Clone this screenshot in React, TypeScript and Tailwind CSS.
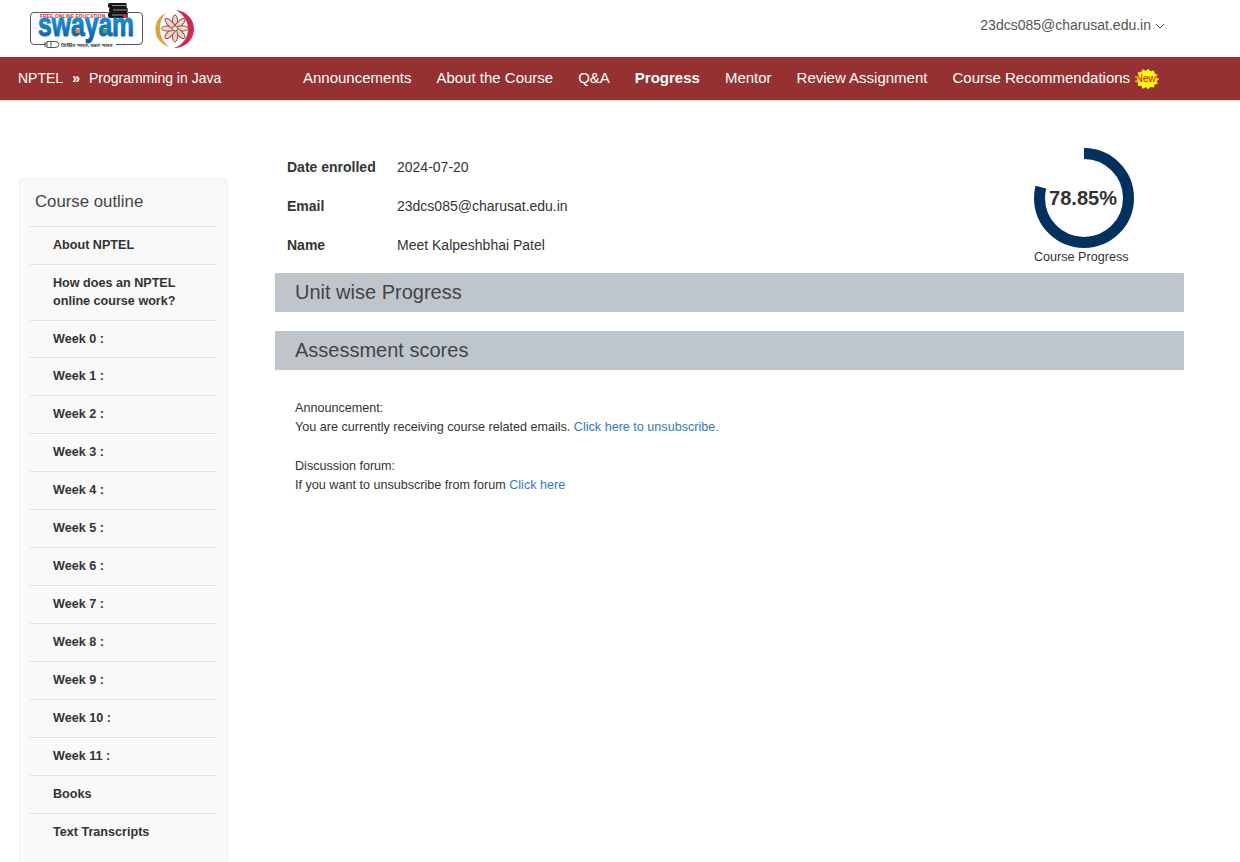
const navLinks = [
  "Announcements",
  "About the Course",
  "Q&A",
  "Progress",
  "Mentor",
  "Review Assignment",
];

const outline = [
  "About NPTEL",
  "How does an NPTEL online course work?",
  "Week 0 :",
  "Week 1 :",
  "Week 2 :",
  "Week 3 :",
  "Week 4 :",
  "Week 5 :",
  "Week 6 :",
  "Week 7 :",
  "Week 8 :",
  "Week 9 :",
  "Week 10 :",
  "Week 11 :",
  "Books",
  "Text Transcripts",
];

const details = [
  ["Date enrolled", "2024-07-20"],
  ["Email", "23dcs085@charusat.edu.in"],
  ["Name", "Meet Kalpeshbhai Patel"],
];

function SwayamLogo() {
  return (
    <svg width="116" height="53" viewBox="0 0 116 53" className="block">
      <defs>
        <linearGradient id="swayamBlue" x1="0" y1="0" x2="0" y2="1">
          <stop offset="0" stopColor="#22a6e6" />
          <stop offset="1" stopColor="#0a5ca6" />
        </linearGradient>
      </defs>
      {/* outline, open at the plug and under the books */}
      <path d="M16 42.500H4a3.500 3.500 0 0 1-3.500-3.500V14A3.500 3.500 0 0 1 4 10.500h74M98 10.500h11a3.500 3.500 0 0 1 3.500 3.500v25a3.500 3.500 0 0 1-3.500 3.500H86" fill="none" stroke="#555" />
      {/* books */}
      <rect x="78" y="1" width="19" height="5" rx="2" fill="#151515" />
      <rect x="79" y="5.500" width="19" height="5" rx="2" fill="#151515" />
      <rect x="78" y="10" width="20" height="6" rx="2" fill="#151515" />
      <path d="M82 3.500h15M83 8h15M82 13h16" stroke="#eee" strokeWidth="0.6" />
      <rect x="93" y="13" width="5" height="3" fill="#d8232a" />
      <text x="10" y="15.500" fontSize="4.800" fontWeight="700" fill="#d8232a" letterSpacing="0.17" fontFamily="Liberation Sans, sans-serif">
        FREE ONLINE EDUCATION
      </text>
      <text transform="translate(8 34) scale(1 1.350)" fontSize="24.700" fontWeight="700" fill="url(#swayamBlue)" stroke="url(#swayamBlue)" strokeWidth="0.8" fontFamily="Liberation Sans, sans-serif">
        swayam
      </text>
      <rect x="46" y="27" width="4" height="4" fill="#f08a1d" />
      <rect x="73" y="27" width="4" height="4" fill="#3fae49" />
      {/* plug */}
      <path d="M17 39.500h8q4 0 4 3t-4 3h-8zM14 41h3M14 44h3M21 39.500v6" fill="#fff" stroke="#555" />
      <text x="31" y="44.500" fontSize="5.200" fontWeight="700" fill="#444" fontFamily="Noto Sans, Liberation Sans, sans-serif">
        शिक्षित भारत, उन्नत भारत
      </text>
    </svg>
  );
}

function InstituteLogo() {
  const petals = [0, 45, 90, 135, 180, 225, 270, 315];
  return (
    <svg width="40" height="40" viewBox="0 0 40 40" className="block">
      <path d="M11 4C2 8-1 17 1 25c1.500 6 6 10.500 13 13C8 33 5 27 5 20 5 13 7 8 11 4z" fill="#d9a441" />
      <path d="M21 1c10 1 18 9 18 19 0 11-9 19-20 19 7-2 14-9 14-19 0-8-5-15-12-19z" fill="#cf2a52" />
      <g stroke="#9c4a3d" strokeWidth="1" fill="#efd5cb">
        {petals.map((deg) => (
          <ellipse key={deg} cx="20" cy="12.500" rx="2.600" ry="6.500" transform={`rotate(${deg} 20 19.500)`} />
        ))}
      </g>
      <circle cx="20" cy="19.500" r="2.500" fill="#fff" stroke="#9c4a3d" />
    </svg>
  );
}

function NewBadge() {
  const spikes = 13;
  const points = Array.from({ length: spikes * 2 }, (_, i) => {
    const a = (Math.PI * i) / spikes;
    const k = i % 2 === 0 ? 1 : 0.8;
    return `${(12 + 12 * k * Math.cos(a)).toFixed(1)},${(10 + 10 * k * Math.sin(a)).toFixed(1)}`;
  }).join(" ");
  return (
    <span className="relative ml-[5px] inline-flex h-[20px] w-[24px] items-center justify-center">
      <svg width="24" height="20" viewBox="0 0 24 20" className="absolute inset-0">
        <polygon points={points} fill="#ffff00" stroke="#fff6a0" strokeWidth="0.5" />
      </svg>
      <span className="relative whitespace-nowrap text-[10px] leading-none text-[#e00000]">New!</span>
    </span>
  );
}

function ProgressRing() {
  const r = 44.5;
  const c = 2 * Math.PI * r;
  return (
    <div className="w-[100px]">
      <div className="relative h-[100px] w-[100px]">
        <svg width="100" height="100" viewBox="0 0 100 100" className="block -rotate-90">
          <circle
            cx="50"
            cy="50"
            r={r}
            fill="none"
            stroke="#03315f"
            strokeWidth="11"
            strokeDasharray={`${c * 0.7885} ${c}`}
          />
        </svg>
        <div className="absolute inset-0 flex items-center justify-center pr-[2px] text-[20px] font-bold text-[#333]">
          78.85%
        </div>
      </div>
      <div className="mt-[1px] whitespace-nowrap text-[12.600px] leading-[16px] text-[#333]">Course Progress</div>
    </div>
  );
}

export default function App() {
  return (
    <div className="h-[862px] overflow-hidden bg-white font-['Liberation_Sans',Arial,sans-serif] text-[14px] text-[#333]">
      {/* Top bar */}
      <header className="flex h-[57px] items-center justify-between pl-[30px] pr-[75px]">
        <div className="flex items-center gap-[9px]">
          <SwayamLogo />
          <InstituteLogo />
        </div>
        <div className="flex -translate-y-[3px] items-center gap-[4px] text-[#555]">
          23dcs085@charusat.edu.in
          <svg width="10" height="6" viewBox="0 0 10 6" fill="none" stroke="#555">
            <path d="M1 1l4 4 4-4" />
          </svg>
        </div>
      </header>

      {/* Nav */}
      <nav className="flex h-[44px] items-center border-b border-[#ddd] bg-[#953131] text-white">
        <div className="flex w-[303px] shrink-0 items-center pl-[18px] text-[14px]">
          NPTEL
          <span className="mx-[9px] font-bold">»</span>
          Programming in Java
        </div>
        <div className="flex items-center gap-[25px] text-[15px]">
          {navLinks.map((link) => (
            <a key={link} className={link === "Progress" ? "font-bold" : ""}>
              {link}
            </a>
          ))}
          <a className="flex items-center">
            Course Recommendations
            <NewBadge />
          </a>
        </div>
      </nav>

      <div className="flex items-start pl-[19px] pr-[56px]">
        {/* Sidebar */}
        <aside className="mt-[77px] w-[209px] shrink-0 rounded-[4px] border border-[#f1f1f1] bg-[#f9f9f9] px-[10px] pb-[40px]">
          <div className="px-[5px] pb-[13px] pt-[12px] text-[16.800px] leading-[22px] text-[#444]">Course outline</div>
          <ul>
            {outline.map((item) => (
              <li
                key={item}
                className={`border-t border-[#e1e1e1] pl-[23px] pr-[30px] pt-[9px] text-[12.600px] font-bold leading-[18px] text-[#333] ${
                  item === "Week 0 :" ? "pb-[9px]" : "pb-[10px]"
                }`}
              >
                {item}
              </li>
            ))}
          </ul>
        </aside>

        {/* Main */}
        <main className="ml-[47px] mt-[47px] min-w-0 flex-1">
          <div className="flex h-[125px] justify-between pr-[50px]">
            <dl className="pl-[12px] pt-[10px]">
              {details.map(([label, value]) => (
                <div key={label} className="flex h-[39px] items-start leading-[18px]">
                  <dt className="w-[110px] font-bold">{label}</dt>
                  <dd>{value}</dd>
                </div>
              ))}
            </dl>
            <ProgressRing />
          </div>

          <h2 className="bg-[#bec6cc] px-[20px] text-[20px] leading-[39px] text-[#444]">Unit wise Progress</h2>
          <h2 className="mt-[19px] bg-[#bec6cc] px-[20px] text-[20px] leading-[39px] text-[#444]">Assessment scores</h2>

          <div className="mt-[29px] px-[20px] text-[12.600px] leading-[19px]">
            <p>Announcement:</p>
            <p>
              You are currently receiving course related emails.{" "}
              <a className="text-[#337ab7]">Click here to unsubscribe.</a>
            </p>
            <p className="mt-[20px]">Discussion forum:</p>
            <p>
              If you want to unsubscribe from forum <a className="text-[#337ab7]">Click here</a>
            </p>
          </div>
        </main>
      </div>
    </div>
  );
}
